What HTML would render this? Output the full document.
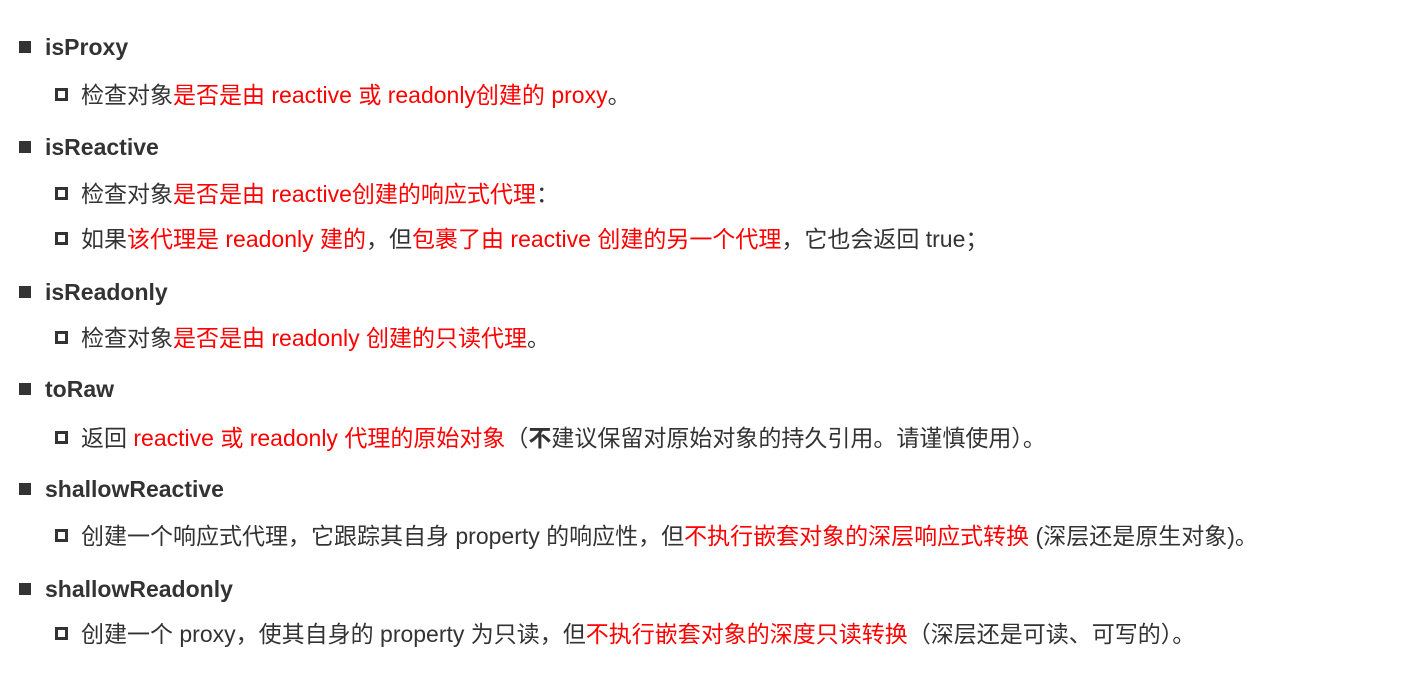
<!DOCTYPE html>
<html><head><meta charset="utf-8"><style>
body{margin:0;width:1426px;height:675px;background:#fff;position:relative;overflow:hidden;font-family:"Liberation Sans","Noto Sans CJK SC",sans-serif;color:#333;}
.h{position:absolute;left:45px;font-size:23px;font-weight:bold;line-height:28px;white-space:nowrap}
.h:before{content:"";position:absolute;left:-26px;top:8px;width:12px;height:12px;background:#333}
.s{position:absolute;left:81px;font-size:23px;line-height:28px;white-space:nowrap}
.s:before{content:"";position:absolute;left:-26px;top:7px;width:7px;height:7px;border:3px solid #333}
.r{color:#f00}
</style></head><body>
<div class="h" style="top:33px">isProxy</div>
<div class="s" style="top:81px">检查对象<span class="r">是否是由 reactive 或 readonly创建的 proxy</span>。</div>
<div class="h" style="top:133px">isReactive</div>
<div class="s" style="top:180px">检查对象<span class="r">是否是由 reactive创建的响应式代理</span>：</div>
<div class="s" style="top:225px">如果<span class="r">该代理是 readonly 建的</span>，但<span class="r">包裹了由 reactive 创建的另一个代理</span>，它也会返回 true；</div>
<div class="h" style="top:278px">isReadonly</div>
<div class="s" style="top:324px">检查对象<span class="r">是否是由 readonly 创建的只读代理</span>。</div>
<div class="h" style="top:375px">toRaw</div>
<div class="s" style="top:424px">返回 <span class="r">reactive 或 readonly 代理的原始对象</span>（<b>不</b>建议保留对原始对象的持久引用。请谨慎使用）。</div>
<div class="h" style="top:475px">shallowReactive</div>
<div class="s" style="top:522px">创建一个响应式代理，它跟踪其自身 property 的响应性，但<span class="r">不执行嵌套对象的深层响应式转换</span> (深层还是原生对象)。</div>
<div class="h" style="top:575px">shallowReadonly</div>
<div class="s" style="top:620px">创建一个 proxy，使其自身的 property 为只读，但<span class="r">不执行嵌套对象的深度只读转换</span>（深层还是可读、可写的）。</div>
</body></html>
